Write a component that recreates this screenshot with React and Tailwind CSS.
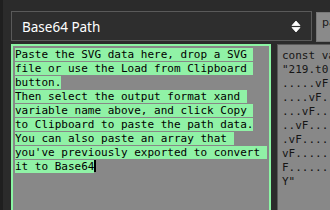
import React from "react";

const leftLines = [
  { t: "Paste the SVG data here, drop a SVG " },
  { t: "file or use the Load from Clipboard " },
  { t: "button." },
  { t: "Then select the output format xand " },
  { t: "variable name above, and click Copy " },
  { t: "to Clipboard to paste the path data." },
  { t: "You can also paste an array that " },
  { t: "you've previously exported to convert " },
  { t: "it to Base64", caret: true },
];

const rightLines = [
  "const variable =",
  "\"219.t0.........",
  ".....vF..........",
  "....vF...........",
  "...vF............",
  "..vF.............",
  ".vF..............",
  "vF...............",
  "F................",
  "Y\"",
];

export default function App() {
  return (
    <div className="w-[330px] h-[210px] overflow-hidden bg-[#2b2b2b] flex">
      <div className="w-[3px] shrink-0 bg-[#1f1f1f]" />
      <div className="flex flex-col pl-[8px] pt-[11px] shrink-0">
        <div className="flex gap-[4px] items-start">
          <div className="w-[301px] h-[30px] shrink-0 border border-[#5a5a5a] bg-[#2e2e2e] flex items-center justify-between pl-[10px] pr-[10px] pt-[1px]">
            <span className="text-white text-[13.5px] leading-[18px] font-['Noto_Sans',sans-serif]">
              Base64 Path
            </span>
            <svg width="10" height="13" viewBox="0 0 10 13" className="-mt-[1px]">
              <path d="M1 5.5 L5 1 L9 5.5 Z" fill="#ffffff" stroke="#ffffff" strokeWidth="0.8" strokeLinejoin="round" />
              <path d="M1 7.5 L5 12 L9 7.5 Z" fill="#ffffff" stroke="#ffffff" strokeWidth="0.8" strokeLinejoin="round" />
            </svg>
          </div>
          <div className="w-[60px] h-[30px] mt-[1px] shrink-0 bg-[#8a8a8a] border border-[#777] pl-[5px] pt-[3px] text-[11px] leading-[14px] text-[#1a1a1a] font-['DejaVu_Sans',sans-serif] overflow-hidden whitespace-nowrap">
            path
          </div>
        </div>
        <div className="flex gap-[6px] mt-[2px] items-start">
          <div className="w-[260px] h-[200px] shrink-0 border-2 border-[#8cf5a4] bg-[#888888] p-[2px] font-['DejaVu_Sans_Mono',monospace] text-[11px] leading-[14px] text-black">
            {leftLines.map((l, i) => (
              <div key={i} className="h-[14px] whitespace-pre">
                <span className="bg-[#90f2a6]">{l.t}</span>
                {l.caret && (
                  <span className="inline-block w-[2px] h-[12px] bg-black align-[-2px]" />
                )}
              </div>
            ))}
          </div>
          <div className="w-[80px] h-[200px] shrink-0 border border-[#5a5a5a] bg-[#888888] pl-[4px] pt-[4px] font-['DejaVu_Sans_Mono',monospace] text-[11px] leading-[14px] text-[#151515] overflow-hidden">
            {rightLines.map((l, i) => (
              <div key={i} className="h-[14px] whitespace-pre">
                {l}
              </div>
            ))}
          </div>
        </div>
      </div>
    </div>
  );
}
